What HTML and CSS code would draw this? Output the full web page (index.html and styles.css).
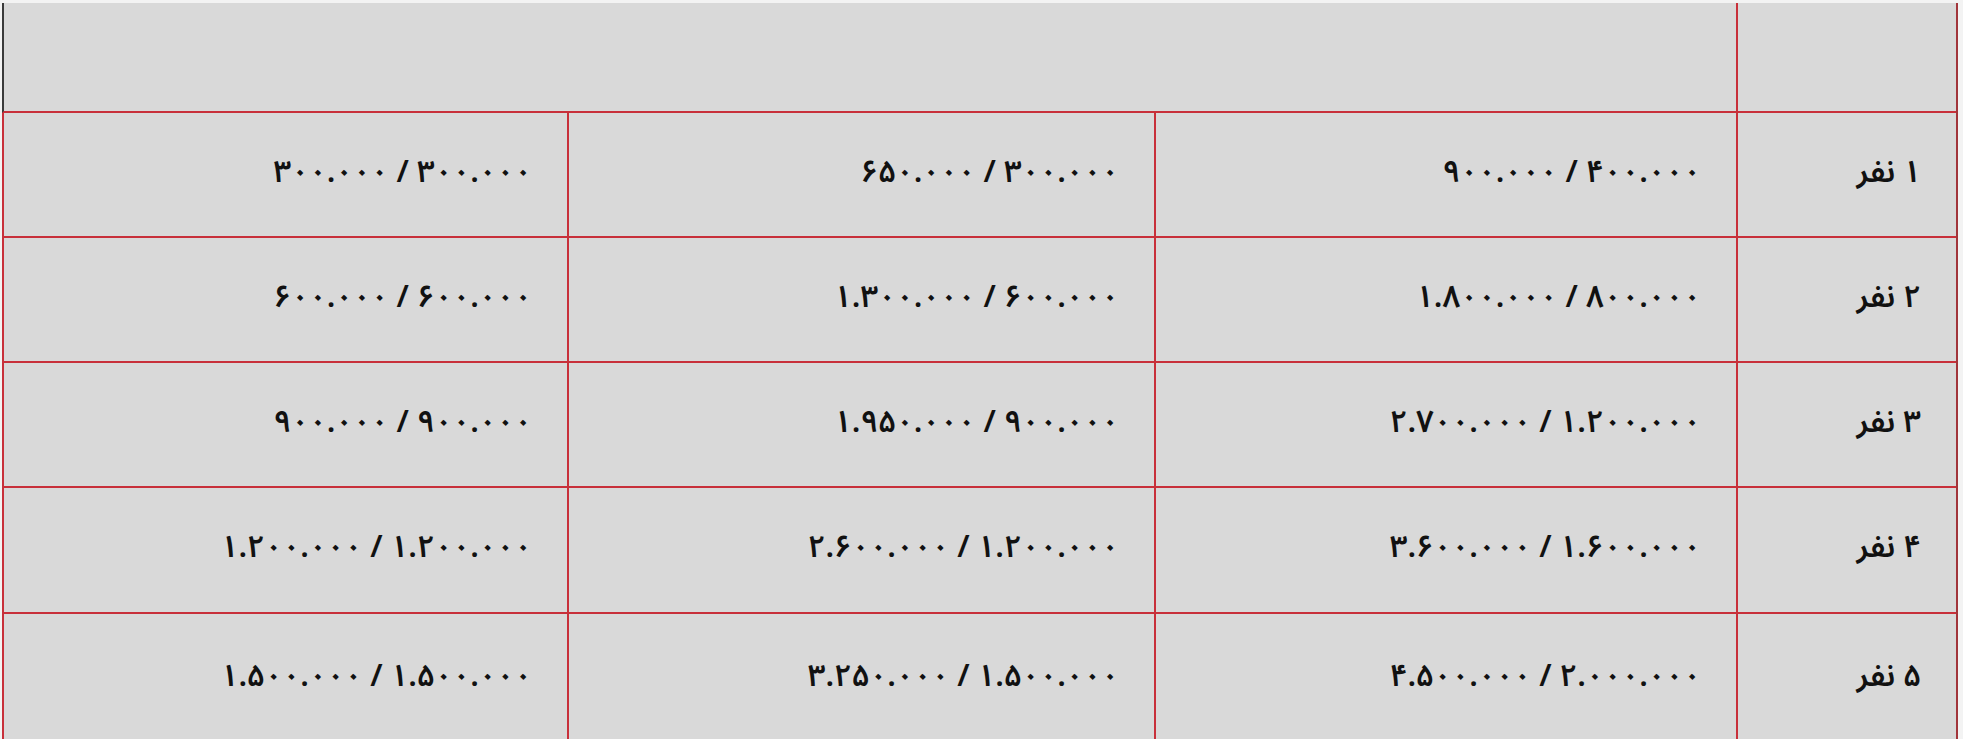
FILE: index.html
```html
<!DOCTYPE html>
<html lang="fa">
<head>
<meta charset="utf-8">
<title>جدول قیمت</title>
<link rel="stylesheet" href="styles.css">
</head>
<body>
<div class="table" dir="rtl">
  <div class="cell head-label"></div>
  <div class="cell head-span"></div>

  <div class="cell label">۱ نفر</div>
  <div class="cell">۴۰۰.۰۰۰ / ۹۰۰.۰۰۰</div>
  <div class="cell">۳۰۰.۰۰۰ / ۶۵۰.۰۰۰</div>
  <div class="cell">۳۰۰.۰۰۰ / ۳۰۰.۰۰۰</div>

  <div class="cell label">۲ نفر</div>
  <div class="cell">۸۰۰.۰۰۰ / ۱.۸۰۰.۰۰۰</div>
  <div class="cell">۶۰۰.۰۰۰ / ۱.۳۰۰.۰۰۰</div>
  <div class="cell">۶۰۰.۰۰۰ / ۶۰۰.۰۰۰</div>

  <div class="cell label">۳ نفر</div>
  <div class="cell">۱.۲۰۰.۰۰۰ / ۲.۷۰۰.۰۰۰</div>
  <div class="cell">۹۰۰.۰۰۰ / ۱.۹۵۰.۰۰۰</div>
  <div class="cell">۹۰۰.۰۰۰ / ۹۰۰.۰۰۰</div>

  <div class="cell label">۴ نفر</div>
  <div class="cell">۱.۶۰۰.۰۰۰ / ۳.۶۰۰.۰۰۰</div>
  <div class="cell">۱.۲۰۰.۰۰۰ / ۲.۶۰۰.۰۰۰</div>
  <div class="cell">۱.۲۰۰.۰۰۰ / ۱.۲۰۰.۰۰۰</div>

  <div class="cell label last">۵ نفر</div>
  <div class="cell last">۲.۰۰۰.۰۰۰ / ۴.۵۰۰.۰۰۰</div>
  <div class="cell last">۱.۵۰۰.۰۰۰ / ۳.۲۵۰.۰۰۰</div>
  <div class="cell last">۱.۵۰۰.۰۰۰ / ۱.۵۰۰.۰۰۰</div>
</div>
</body>
</html>
```

FILE: styles.css
```css
html, body {
  margin: 0;
  padding: 0;
  background: #f3f3f3;
  overflow: hidden;
}

body {
  padding: 3px 0 0 2px;
}

.table {
  display: grid;
  grid-template-columns: 220px 582px 587px 565px;
  grid-template-rows: 110px 125px 125px 125px 126px 130px;
  width: max-content;
  background: #d9d9d9;
  border-right: 2px solid #a2353b;
  font-family: "Noto Sans Arabic", "DejaVu Sans", sans-serif;
  font-weight: 600;
  font-size: 31px;
  color: #111;
}

.cell {
  box-sizing: border-box;
  border-left: 2px solid #c8303a;
  border-bottom: 2px solid #c8303a;
  display: flex;
  align-items: center;
  justify-content: flex-start;
  padding: 0 35px 6px 35px;
  white-space: nowrap;
}

.head-span {
  grid-column: span 3;
  border-left-color: #3a3a3a;
}

.last {
  border-bottom: none;
}
```
